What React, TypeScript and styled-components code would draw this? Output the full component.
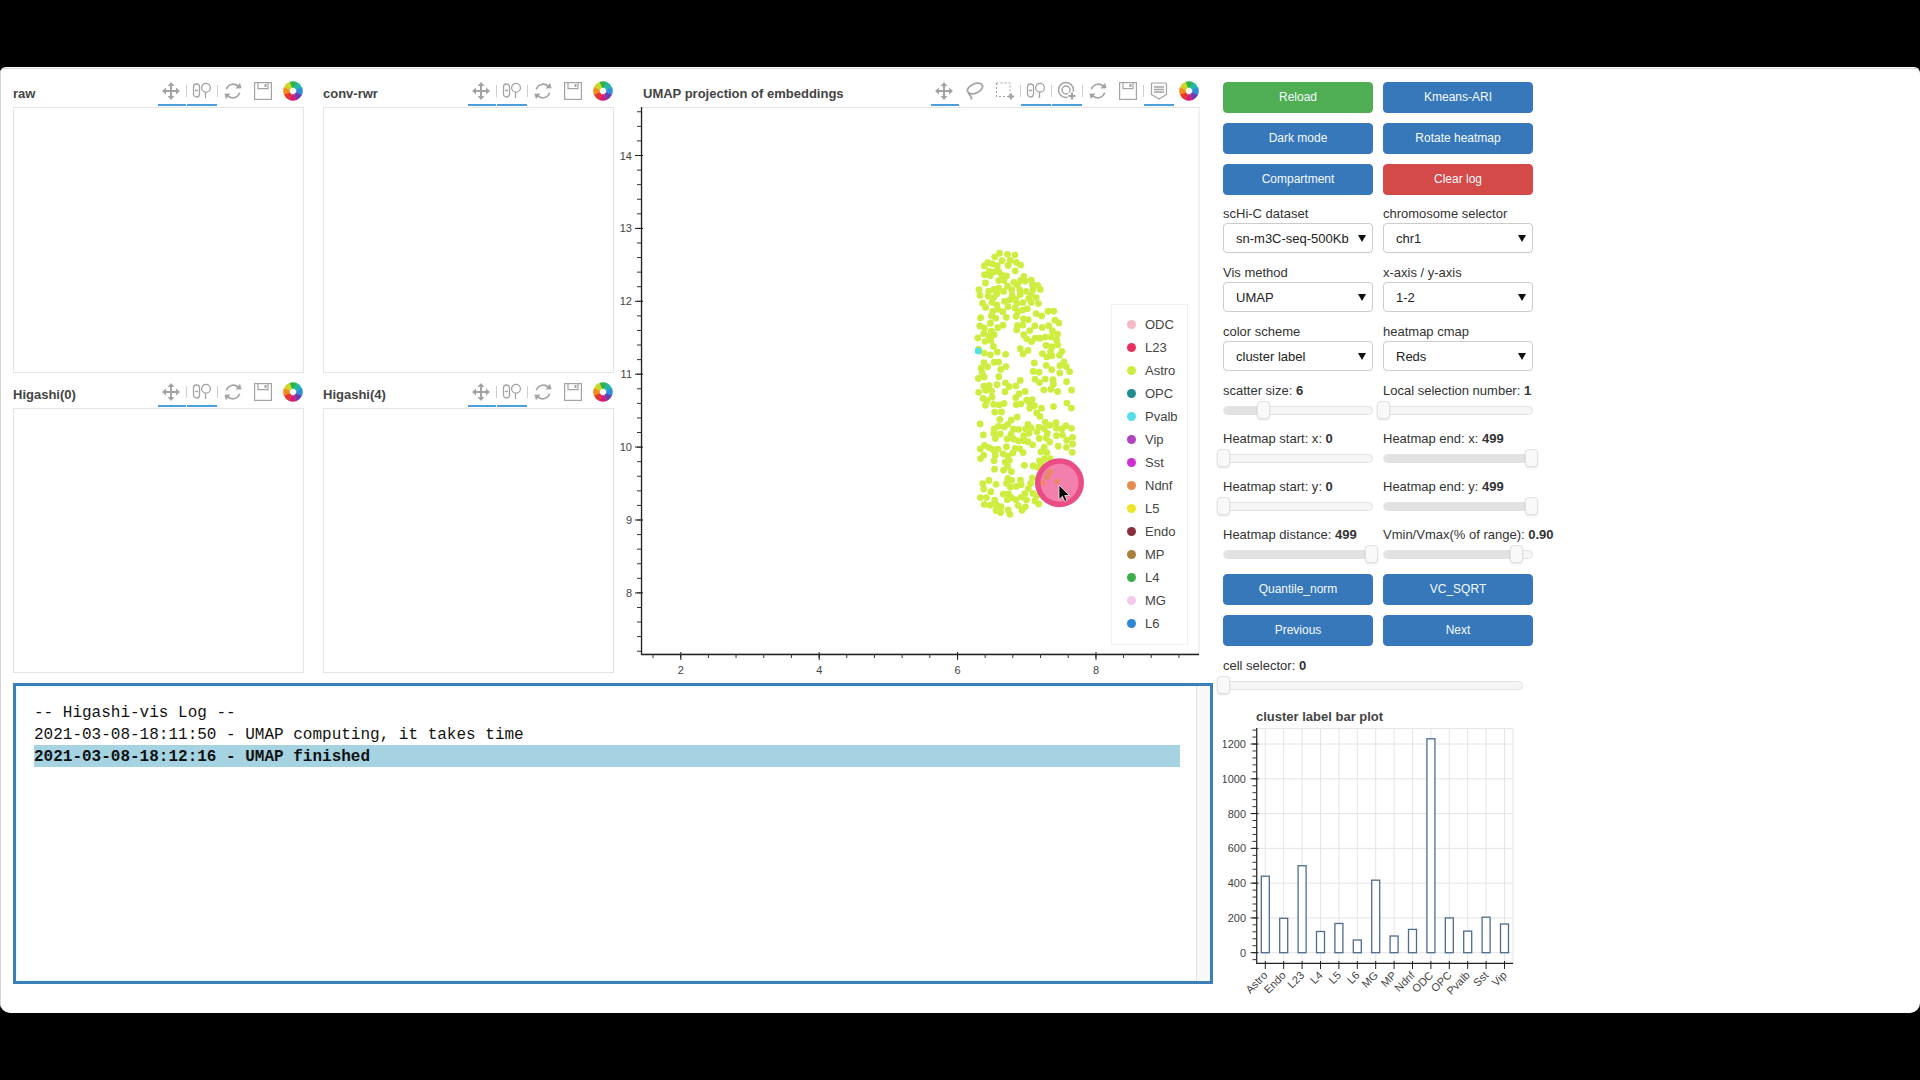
import React from "react";
import styled, { createGlobalStyle } from "styled-components";

const GlobalStyle = createGlobalStyle`
  html, body {
    margin: 0;
    background: #000;
    font-family: "Liberation Sans", Arial, sans-serif;
  }
`;

// ---------- toolbar icons ----------
const ICON = "#a3a3a3";

const PanIcon = () => (
  <svg width="20" height="20" viewBox="0 0 20 20">
    <path
      fill={ICON}
      d="M10 1l3.4 4h-2.4v4h4v-2.4l4 3.4-4 3.4v-2.4h-4v4h2.4l-3.4 4-3.4-4h2.4v-4h-4v2.4l-4-3.4 4-3.4v2.4h4v-4H6.6z"
    />
  </svg>
);

const WheelIcon = () => (
  <svg width="20" height="20" viewBox="0 0 20 20" fill="none" stroke={ICON} strokeWidth="1.3">
    <rect x="1.5" y="3" width="6" height="13" rx="3" />
    <path d="M3 9.500h3" />
    <circle cx="14" cy="6.800" r="4.400" />
    <path d="M13.500 11v6" />
  </svg>
);

const ResetIcon = () => (
  <svg width="20" height="20" viewBox="0 0 20 20" fill="none" stroke={ICON} strokeWidth="1.7">
    <path d="M3.4 8.4A7 7 0 0 1 15.2 5.4" />
    <path d="M16.6 11.6A7 7 0 0 1 4.8 14.6" />
    <path fill={ICON} stroke="none" d="M12.6 7.4l6-.2-1.6-5.4zM7.4 12.6l-6 .2 1.6 5.4z" />
  </svg>
);

const SaveIcon = () => (
  <svg width="18" height="18" viewBox="0 0 18 18" fill="none" stroke={ICON} strokeWidth="1.2">
    <rect x="0.6" y="0.6" width="16.8" height="16.8" />
    <path d="M4 0.6v6h10v-6" />
    <rect x="10.5" y="2" width="2" height="3" fill={ICON} stroke="none" />
  </svg>
);

const LassoIcon = () => (
  <svg width="20" height="20" viewBox="0 0 20 20" fill="none" stroke={ICON} strokeWidth="1.8">
    <ellipse cx="11" cy="7.5" rx="8" ry="4.6" transform="rotate(-24 11 7.5)" />
    <path d="M5 11c-1.5 2 1.5 3 2 4.500l.5 3" />
  </svg>
);

const BoxIcon = () => (
  <svg width="20" height="20" viewBox="0 0 20 20" fill="none" stroke={ICON}>
    <rect x="1.500" y="2" width="13.500" height="13.500" strokeDasharray="2 2" strokeWidth="1.100" />
    <path d="M16 12.500v6M13 15.500h6" strokeWidth="2.200" />
  </svg>
);

const PointIcon = () => (
  <svg width="20" height="20" viewBox="0 0 20 20" fill="none" stroke={ICON} strokeWidth="1.500">
    <circle cx="9" cy="9" r="7.500" />
    <circle cx="9" cy="9" r="4" />
    <circle cx="15" cy="15" r="4.500" fill="#fff" stroke="none" />
    <path d="M15 11.500v7M11.500 15h7" strokeWidth="2.200" />
  </svg>
);

const HoverIcon = () => (
  <svg width="20" height="20" viewBox="0 0 20 20" fill="none" stroke={ICON} strokeWidth="1.200">
    <path d="M3.500 2h13a1 1 0 0 1 1 1v10.500L10 18l-7.500-4.500V3a1 1 0 0 1 1-1z" />
    <path d="M5 6h10M5 8.500h10M5 11h10" strokeWidth="1.300" />
  </svg>
);

const LOGO_COLORS = ["#2cb34a", "#21b6a8", "#2f8fd8", "#6c3fb0", "#d81b7a", "#e5382a", "#f28c1e", "#cfd62a"];

const LogoIcon = () => (
  <svg width="20" height="20" viewBox="0 0 20 20" fill="none">
    {LOGO_COLORS.map((color, i) => (
      <circle
        key={color}
        cx="10"
        cy="10"
        r="6.500"
        stroke={color}
        strokeWidth="6.500"
        strokeDasharray="5.200 35.640"
        transform={`rotate(${i * 45 - 112} 10 10)`}
      />
    ))}
  </svg>
);

// ---------- toolbar ----------
const FigureHeader = styled.div`
  display: flex;
  justify-content: space-between;
  height: 35px;
`;

const FigureTitle = styled.div<{ $indent?: number }>`
  font-size: 13px;
  font-weight: bold;
  color: #444;
  line-height: 44px;
  padding-left: ${(p) => p.$indent || 0}px;
  white-space: nowrap;
`;

const Toolbar = styled.div`
  display: flex;
  margin-right: 1px;
`;

const Tool = styled.div<{ $active?: boolean; $width?: number }>`
  display: flex;
  align-items: center;
  justify-content: center;
  box-sizing: border-box;
  width: ${(p) => p.$width || 30}px;
  height: 34px;
  padding-top: 5px;
  border-bottom: 2px solid ${(p) => (p.$active ? "#4a9fdc" : "transparent")};
`;

const PanTool = styled(Tool)`
  width: 28px;
  padding-right: 2px;
`;

const LogoTool = styled(Tool)`
  width: 25px;
  padding-left: 5px;
`;

const ToolSep = styled.div`
  width: 1px;
  height: 12px;
  margin-top: 13px;
  background: #cfcfcf;
`;

// ---------- heatmap panels ----------
const HeatmapGrid = styled.div`
  display: grid;
  grid-template-columns: 291px 291px;
  grid-template-rows: 301px 300px;
  column-gap: 19px;
`;

const Figure = styled.div`
  display: flex;
  flex-direction: column;
`;

const HeatmapFrame = styled.div`
  flex: 1;
  border: 1px solid #e4e4e4;
`;

const HeatmapFigure = ({ title }: { title: string }) => (
  <Figure>
    <FigureHeader>
      <FigureTitle>{title}</FigureTitle>
      <Toolbar>
        <PanTool $active><PanIcon /></PanTool>
        <ToolSep />
        <Tool $active><WheelIcon /></Tool>
        <ToolSep />
        <Tool><ResetIcon /></Tool>
        <Tool><SaveIcon /></Tool>
        <LogoTool><LogoIcon /></LogoTool>
      </Toolbar>
    </FigureHeader>
    <HeatmapFrame />
  </Figure>
);

// ---------- UMAP scatter ----------
const LEGEND = [
  ["ODC", "#f5b9c6"],
  ["L23", "#e8305f"],
  ["Astro", "#cdee40"],
  ["OPC", "#1f8a8f"],
  ["Pvalb", "#55dfe8"],
  ["Vip", "#b044bd"],
  ["Sst", "#cf30cf"],
  ["Ndnf", "#e68c50"],
  ["L5", "#ece42a"],
  ["Endo", "#8c2f3c"],
  ["MP", "#a8803c"],
  ["L4", "#3fae4a"],
  ["MG", "#f5c8ee"],
  ["L6", "#2d87d0"],
];

function mulberry(seed: number) {
  return () => {
    seed = (seed + 0x6d2b79f5) | 0;
    let t = Math.imul(seed ^ (seed >>> 15), 1 | seed);
    t = (t + Math.imul(t ^ (t >>> 7), 61 | t)) ^ t;
    return ((t ^ (t >>> 14)) >>> 0) / 4294967296;
  };
}

function lerp(table: number[][], y: number) {
  for (let i = 1; i < table.length; i++) {
    if (y <= table[i][0]) {
      const [y0, x0] = table[i - 1];
      const [y1, x1] = table[i];
      return x0 + ((x1 - x0) * (y - y0)) / (y1 - y0);
    }
  }
  return table[table.length - 1][1];
}

const LEFT_EDGE = [[253, 997], [267, 982], [297, 977], [400, 977], [473, 976], [497, 974], [515, 997]];
const RIGHT_EDGE = [[253, 1015], [273, 1027], [300, 1053], [350, 1068], [423, 1077], [457, 1073], [500, 1055], [515, 1012]];

// clumps of dots with holes between them, like the real cloud
const scatterPoints = (() => {
  const rand = mulberry(17);
  const pts: { x: number; y: number }[] = [];
  let guard = 0;
  while (pts.length < 335 && guard < 4000) {
    guard++;
    const cy = 253 + rand() * 262;
    const cx = lerp(LEFT_EDGE, cy) + rand() * (lerp(RIGHT_EDGE, cy) - lerp(LEFT_EDGE, cy));
    const count = 1 + Math.floor(rand() * 7);
    const spread = 4 + rand() * 6;
    for (let i = 0; i < count; i++) {
      const y = cy + (rand() - 0.5) * 2 * spread;
      const x = cx + (rand() - 0.5) * 2 * spread;
      if (y < 253 || y > 515 || x < lerp(LEFT_EDGE, y) || x > lerp(RIGHT_EDGE, y)) continue;
      if (pts.some((p) => Math.hypot(p.x - x, p.y - y) < 4.4)) continue;
      pts.push({ x, y });
    }
  }
  return pts;
})();

const PlotArea = styled.div`
  position: relative;
  width: 586px;
  height: 570px;
`;

const PlotSvg = styled.svg`
  display: block;
`;

const Legend = styled.div`
  position: absolute;
  top: 197px;
  right: 12px;
  box-sizing: border-box;
  width: 77px;
  height: 341px;
  padding: 8px 0 0 15px;
  background: #fff;
  border: 1px solid #f0f0f0;
`;

const LegendItem = styled.div`
  display: flex;
  align-items: center;
  gap: 9px;
  height: 23px;
  font-size: 13px;
  color: #444;
`;

const LegendDot = styled.span<{ $color: string }>`
  width: 9px;
  height: 9px;
  border-radius: 50%;
  background: ${(p) => p.$color};
`;

const UMAP_X = [2, 4, 6, 8];
const UMAP_Y = [14, 13, 12, 11, 10, 9, 8];
const xPos = (v: number) => 680.8 + ((v - 2) / 2) * 138.4;
const yPos = (v: number) => 155.5 + (14 - v) * 72.9;

const UmapPlot = () => {
  const xMinor: number[] = [];
  for (let x = 653; x < 1199; x += 27.68) xMinor.push(x);
  const yMinor: number[] = [];
  for (let y = 111.76; y < 654; y += 14.58) yMinor.push(y);

  return (
    <PlotArea>
      <PlotSvg width="586" height="570" viewBox="614 107 586 570">
        <rect x="642" y="107.500" width="557" height="546" fill="#fff" stroke="#e4e4e4" />
        {scatterPoints.map((p, i) => (
          <circle key={i} cx={p.x} cy={p.y} r="3.400" fill="#cdee40" />
        ))}
        <circle cx="978.300" cy="351" r="3.500" fill="#55dfe8" />
        <circle cx="1059.500" cy="482.700" r="24.500" fill="#ea4c85" />
        <circle cx="1059.500" cy="482.700" r="19" fill="#f37fac" />
        <circle cx="1050" cy="472" r="3" fill="#e98a5c" />
        <circle cx="1047" cy="477" r="2.800" fill="#e98a5c" />
        <circle cx="1057" cy="481.500" r="2.500" fill="#e98a5c" />
        <circle cx="1043" cy="483" r="2.500" fill="#e98a5c" />
        <path
          d="M1059 485v14.500l3.400-3.200 2.400 5.200 2.300-1-2.400-5h4.700z"
          fill="#000"
          stroke="#fff"
          strokeWidth="0.700"
        />
        <path d="M641.500 107V654.500H1199" fill="none" stroke="#222" strokeWidth="1.300" />
        {xMinor.map((x) => (
          <path key={x} d={`M${x} 654v4`} stroke="#333" />
        ))}
        {yMinor.map((y) => (
          <path key={y} d={`M641 ${y}h-4`} stroke="#333" />
        ))}
        {UMAP_X.map((v) => (
          <g key={v}>
            <path d={`M${xPos(v)} 652v8`} stroke="#222" />
            <text x={xPos(v)} y="674" fontSize="11" fill="#444" textAnchor="middle">{v}</text>
          </g>
        ))}
        {UMAP_Y.map((v) => (
          <g key={v}>
            <path d={`M635 ${yPos(v)}h8`} stroke="#222" />
            <text x="632" y={yPos(v) + 4} fontSize="11" fill="#444" textAnchor="end">{v}</text>
          </g>
        ))}
      </PlotSvg>
      <Legend>
        {LEGEND.map(([name, color]) => (
          <LegendItem key={name}>
            <LegendDot $color={color} />
            {name}
          </LegendItem>
        ))}
      </Legend>
    </PlotArea>
  );
};

// ---------- log ----------
const LogBox = styled.div`
  display: flex;
  box-sizing: border-box;
  height: 301px;
  margin-top: 6px;
  border: 3px solid #3b7fb8;
  box-shadow: inset 0 0 0 1px #e6fbff;
`;

const LogText = styled.div`
  flex: 1;
  padding: 15px 16px 0 18px;
  font-family: "Liberation Mono", "Courier New", monospace;
  font-size: 16px;
  line-height: 20px;
  color: #111;
`;

const LogLine = styled.div<{ $current?: boolean }>`
  padding-top: 2px;
  white-space: pre;
  font-weight: ${(p) => (p.$current ? "bold" : "normal")};
  background: ${(p) => (p.$current ? "#a5d3e2" : "transparent")};
`;

const LogScroll = styled.div`
  width: 13px;
  background: #f8f8f8;
  border-left: 1px solid #e2e2e2;
`;

// ---------- controls ----------
const Controls = styled.div`
  width: 310px;
  padding-top: 10px;
`;

const ControlGrid = styled.div<{ $top?: number; $gap?: number }>`
  display: grid;
  grid-template-columns: 150px 150px;
  column-gap: 10px;
  row-gap: ${(p) => p.$gap ?? 10}px;
  margin-top: ${(p) => p.$top || 0}px;
`;

const WideCell = styled.div`
  grid-column: 1 / 3;
`;

const COLORS = { green: "#4fae53", blue: "#3778bb", red: "#d34a48" };

const Btn = styled.button<{ $tone?: keyof typeof COLORS }>`
  box-sizing: border-box;
  height: 31px;
  padding: 0 0 2px;
  border: 1px solid ${(p) => COLORS[p.$tone || "blue"]};
  border-radius: 4px;
  background: ${(p) => COLORS[p.$tone || "blue"]};
  color: #f4fbff;
  font-family: inherit;
  font-size: 12px;
`;

const Label = styled.div`
  font-size: 13px;
  line-height: 18px;
  color: #333;
  white-space: nowrap;
`;

const SelectWrap = styled.div`
  position: relative;
  &::after {
    content: "";
    position: absolute;
    right: 7px;
    top: 12px;
    border-left: 4px solid transparent;
    border-right: 4px solid transparent;
    border-top: 7px solid #111;
  }
`;

const Select = styled.select`
  display: block;
  box-sizing: border-box;
  width: 150px;
  height: 30px;
  padding: 0 0 0 12px;
  appearance: none;
  background: #fff;
  border: 1px solid #ccc;
  border-radius: 4px;
  color: #222;
  font-family: inherit;
  font-size: 13px;
`;

const Track = styled.div<{ $wide?: boolean }>`
  position: relative;
  box-sizing: border-box;
  width: ${(p) => (p.$wide ? 300 : 150)}px;
  height: 9px;
  margin-top: 6px;
  background: #f6f6f6;
  border: 1px solid #e2e2e2;
  border-radius: 5px;
`;

const TrackFill = styled.div`
  height: 100%;
  background: #e2e2e2;
  border-radius: 4px;
`;

const Thumb = styled.div`
  position: absolute;
  top: -6px;
  box-sizing: border-box;
  width: 13px;
  height: 18px;
  margin-left: -7px;
  background: #f9f9f9;
  border: 1px solid #e2e2e2;
  border-radius: 4px;
  box-shadow: 0 1px 2px rgba(0, 0, 0, 0.12);
`;

const Slider = ({ label, value, pct, wide }: { label: string; value: string; pct: number; wide?: boolean }) => (
  <div>
    <Label>
      {label}: <b>{value}</b>
    </Label>
    <Track $wide={wide}>
      <TrackFill style={{ width: `${pct}%` }} />
      <Thumb style={{ left: `${pct}%` }} />
    </Track>
  </div>
);

const Dropdown = ({ label, value }: { label: string; value: string }) => (
  <div>
    <Label>{label}</Label>
    <SelectWrap>
      <Select defaultValue={value}>
        <option>{value}</option>
      </Select>
    </SelectWrap>
  </div>
);

// ---------- bar plot ----------
const BARS: [string, number][] = [
  ["Astro", 440],
  ["Endo", 198],
  ["L23", 500],
  ["L4", 122],
  ["L5", 168],
  ["L6", 73],
  ["MG", 417],
  ["MP", 96],
  ["Ndnf", 134],
  ["ODC", 1230],
  ["OPC", 200],
  ["Pvalb", 124],
  ["Sst", 204],
  ["Vip", 165],
];

const BarTitle = styled.div`
  margin-top: 18px;
  padding-left: 33px;
  font-size: 13px;
  font-weight: bold;
  line-height: 18px;
  color: #444;
`;

const barY = (v: number) => 952.7 - v * 0.1739;
const barX = (i: number) => 1265.3 + i * 18.4;

const BarPlot = () => {
  const minor: number[] = [];
  for (let v = -40; v <= 1280; v += 40) minor.push(v);
  return (
    <PlotSvg width="300" height="287" viewBox="1223 726 300 287">
      <rect x="1257" y="728.500" width="256" height="235" fill="#fff" stroke="#e4e4e4" />
      {BARS.map(([name], i) => (
        <path key={name} d={`M${barX(i)} 728v235`} stroke="#e4e4e4" />
      ))}
      {[0, 200, 400, 600, 800, 1000, 1200].map((v) => (
        <path key={v} d={`M1257 ${barY(v)}h256`} stroke="#e4e4e4" />
      ))}
      {BARS.map(([name, v], i) => (
        <rect
          key={name}
          x={barX(i) - 4}
          y={barY(v)}
          width="8"
          height={952.7 - barY(v)}
          fill="#fff"
          stroke="#4c6c8c"
          strokeWidth="1.300"
        />
      ))}
      <path d="M1256.700 728V963.300H1513" fill="none" stroke="#222" strokeWidth="1.200" />
      {minor.map((v) => (
        <path key={v} d={`M1256.500 ${barY(v)}h-4`} stroke="#333" />
      ))}
      {[0, 200, 400, 600, 800, 1000, 1200].map((v) => (
        <g key={v}>
          <path d={`M1250.500 ${barY(v)}h8`} stroke="#222" />
          <text x="1246" y={barY(v) + 4} fontSize="11" fill="#444" textAnchor="end">{v}</text>
        </g>
      ))}
      {BARS.map(([name], i) => (
        <g key={name}>
          <path d={`M${barX(i)} 961v8`} stroke="#222" />
          <text
            x={barX(i) + 3}
            y="976"
            fontSize="11"
            fill="#444"
            textAnchor="end"
            transform={`rotate(-45 ${barX(i) + 3} 976)`}
          >
            {name}
          </text>
        </g>
      ))}
    </PlotSvg>
  );
};

// ---------- page ----------
const Page = styled.div`
  height: 1080px;
  padding-top: 67px;
  box-sizing: border-box;
  overflow: hidden;
`;

const Window = styled.div`
  box-sizing: border-box;
  height: 946px;
  padding-top: 1px;
  background: #fff;
  border-radius: 6px 6px 10px 10px;
  overflow: hidden;
`;

const WindowBody = styled.div`
  display: flex;
  gap: 10px;
  box-sizing: border-box;
  height: 100%;
  padding: 3px 0 0 12px;
  border-top: 1px solid #dcdcdc;
  border-left: 1px solid #d4d4d4;
`;

const LeftColumn = styled.div`
  width: 1200px;
`;

const PlotsRow = styled.div`
  display: flex;
  align-items: flex-start;
`;

export default function App() {
  return (
    <Page>
      <GlobalStyle />
      <Window>
        <WindowBody>
          <LeftColumn>
            <PlotsRow>
              <HeatmapGrid>
                <HeatmapFigure title="raw" />
                <HeatmapFigure title="conv-rwr" />
                <HeatmapFigure title="Higashi(0)" />
                <HeatmapFigure title="Higashi(4)" />
              </HeatmapGrid>
              <Figure>
                <FigureHeader>
                  <FigureTitle $indent={29}>UMAP projection of embeddings</FigureTitle>
                  <Toolbar>
                    <PanTool $active><PanIcon /></PanTool>
                    <Tool><LassoIcon /></Tool>
                    <Tool $width={31}><BoxIcon /></Tool>
                    <ToolSep />
                    <Tool $active><WheelIcon /></Tool>
                    <ToolSep />
                    <Tool $active><PointIcon /></Tool>
                    <ToolSep />
                    <Tool><ResetIcon /></Tool>
                    <Tool><SaveIcon /></Tool>
                    <ToolSep />
                    <Tool $active><HoverIcon /></Tool>
                    <LogoTool><LogoIcon /></LogoTool>
                  </Toolbar>
                </FigureHeader>
                <UmapPlot />
              </Figure>
            </PlotsRow>
            <LogBox>
              <LogText>
                <LogLine>-- Higashi-vis Log --</LogLine>
                <LogLine>2021-03-08-18:11:50 - UMAP computing, it takes time</LogLine>
                <LogLine $current>2021-03-08-18:12:16 - UMAP finished</LogLine>
              </LogText>
              <LogScroll />
            </LogBox>
          </LeftColumn>
          <Controls>
            <ControlGrid>
              <Btn $tone="green">Reload</Btn>
              <Btn>Kmeans-ARI</Btn>
              <Btn>Dark mode</Btn>
              <Btn>Rotate heatmap</Btn>
              <Btn>Compartment</Btn>
              <Btn $tone="red">Clear log</Btn>
            </ControlGrid>
            <ControlGrid $top={10} $gap={11}>
              <Dropdown label="scHi-C dataset" value="sn-m3C-seq-500Kb" />
              <Dropdown label="chromosome selector" value="chr1" />
              <Dropdown label="Vis method" value="UMAP" />
              <Dropdown label="x-axis / y-axis" value="1-2" />
              <Dropdown label="color scheme" value="cluster label" />
              <Dropdown label="heatmap cmap" value="Reds" />
            </ControlGrid>
            <ControlGrid $top={11} $gap={15}>
              <Slider label="scatter size" value="6" pct={27} />
              <Slider label="Local selection number" value="1" pct={0} />
              <Slider label="Heatmap start: x" value="0" pct={0} />
              <Slider label="Heatmap end: x" value="499" pct={100} />
              <Slider label="Heatmap start: y" value="0" pct={0} />
              <Slider label="Heatmap end: y" value="499" pct={100} />
              <Slider label="Heatmap distance" value="499" pct={100} />
              <Slider label="Vmin/Vmax(% of range)" value="0.90" pct={90} />
            </ControlGrid>
            <ControlGrid $top={15}>
              <Btn>Quantile_norm</Btn>
              <Btn>VC_SQRT</Btn>
              <Btn>Previous</Btn>
              <Btn>Next</Btn>
            </ControlGrid>
            <ControlGrid $top={11}>
              <WideCell>
                <Slider label="cell selector" value="0" pct={0} wide />
              </WideCell>
            </ControlGrid>
            <BarTitle>cluster label bar plot</BarTitle>
            <BarPlot />
          </Controls>
        </WindowBody>
      </Window>
    </Page>
  );
}
